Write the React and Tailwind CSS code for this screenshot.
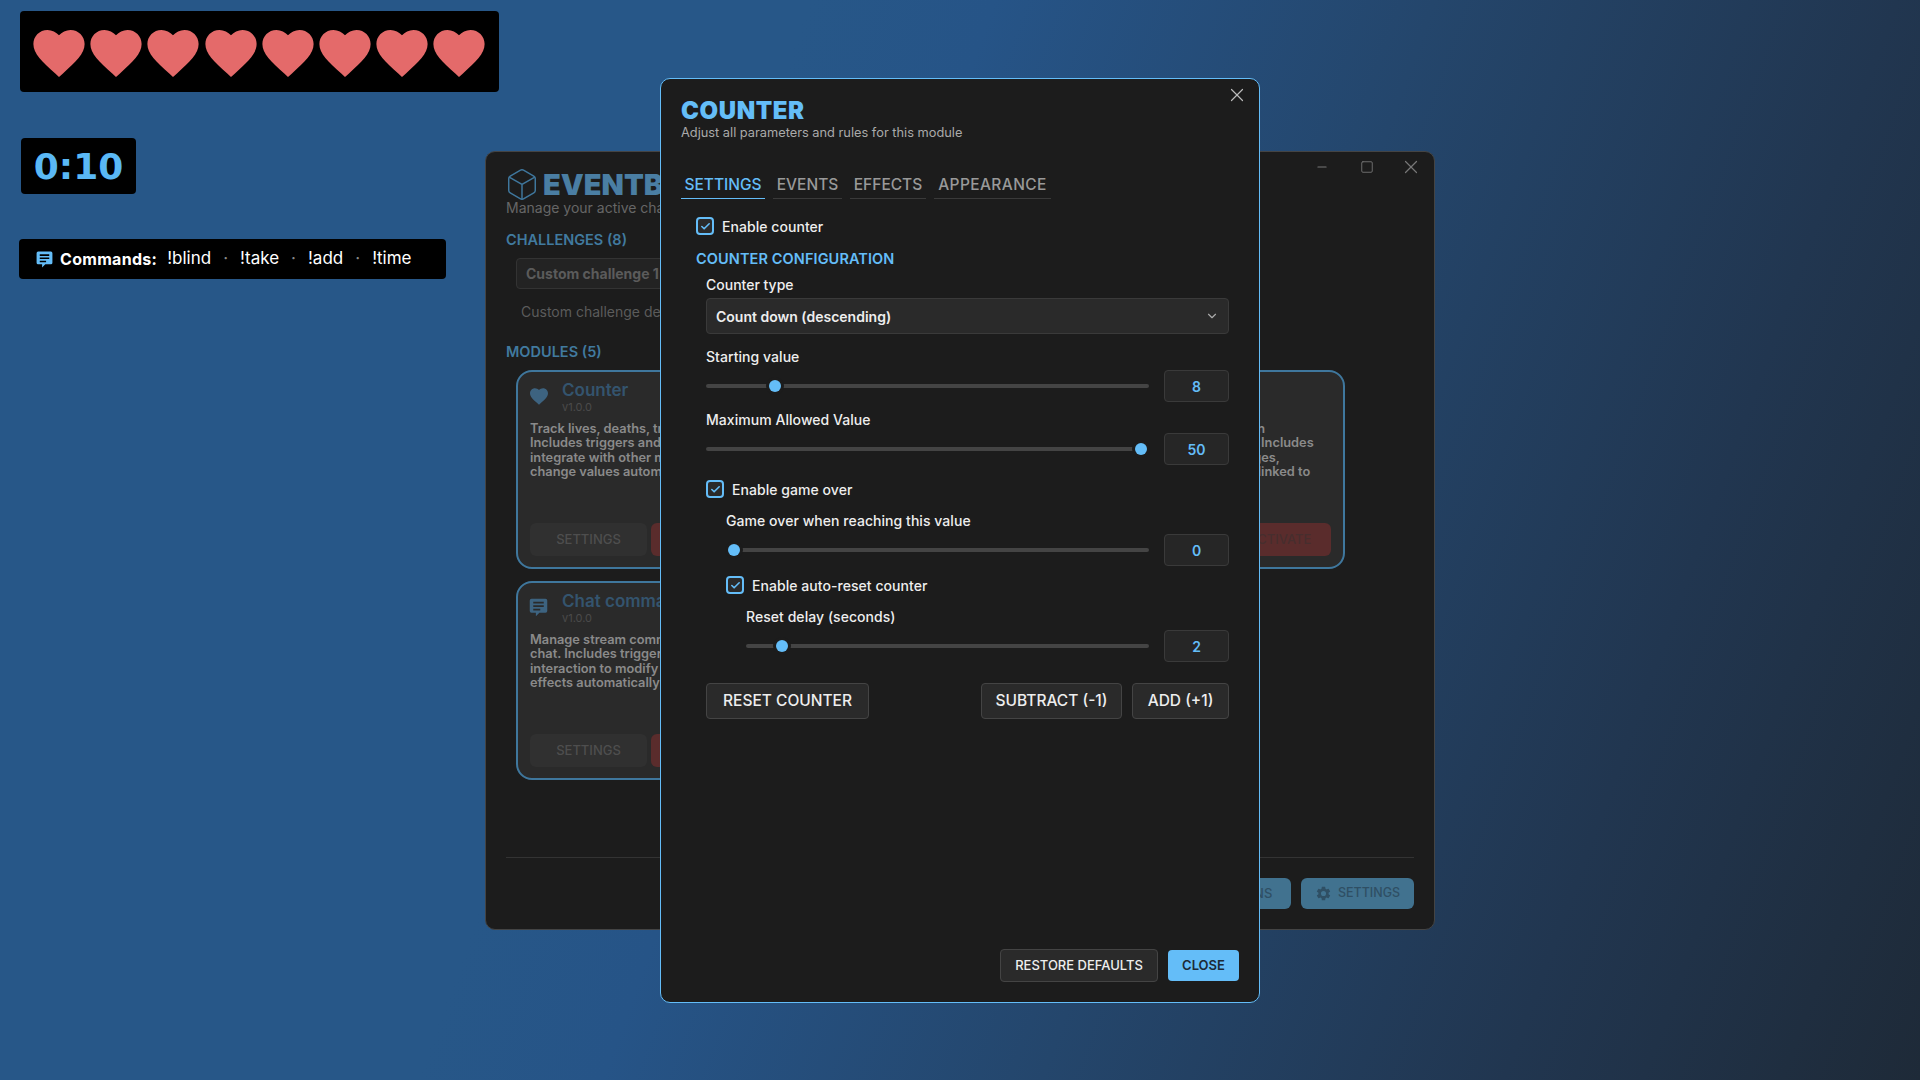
import React from 'react';
import { Check, ChevronDown, Minus, Square, X } from 'lucide-react';

const font = "font-['Inter','Liberation_Sans',sans-serif]";

const heartPath = "M12 21.35l-1.45-1.32C5.4 15.36 2 12.28 2 8.5 2 5.42 4.42 3 7.5 3c1.74 0 3.41.81 4.5 2.09C13.09 3.81 14.76 3 16.5 3 19.58 3 22 5.42 22 8.5c0 3.78-3.4 6.86-8.55 11.54L12 21.35z";
const chatPath = "M4 2h16a2 2 0 0 1 2 2v12a2 2 0 0 1-2 2h-7l-4 4v-4H4a2 2 0 0 1-2-2V4a2 2 0 0 1 2-2zM6 5.5v2h12v-2zM6 9.5v2h12v-2zM6 13.5v2h8v-2z";
const gearPath = "M19.14 12.94c.04-.3.06-.61.06-.94 0-.32-.02-.64-.07-.94l2.03-1.58a.49.49 0 0 0 .12-.61l-1.92-3.32a.49.49 0 0 0-.59-.22l-2.39.96c-.5-.38-1.03-.7-1.62-.94l-.36-2.54a.48.48 0 0 0-.48-.41h-3.84a.48.48 0 0 0-.47.41l-.36 2.54c-.59.24-1.13.57-1.62.94l-2.39-.96a.48.48 0 0 0-.59.22L2.74 8.87a.48.48 0 0 0 .12.61l2.03 1.58c-.05.3-.09.63-.09.94s.02.64.07.94l-2.03 1.58a.49.49 0 0 0-.12.61l1.92 3.32c.12.22.37.29.59.22l2.39-.96c.5.38 1.03.7 1.62.94l.36 2.54c.05.24.24.41.48.41h3.84c.24 0 .44-.17.47-.41l.36-2.54c.59-.24 1.13-.56 1.62-.94l2.39.96c.22.08.47 0 .59-.22l1.92-3.32a.48.48 0 0 0-.12-.61l-2.01-1.58zM12 15.6A3.6 3.6 0 1 1 12 8.4a3.6 3.6 0 0 1 0 7.2z";

function Heart({ className }) {
  return (
    <svg viewBox="2 3 20 18.35" className={className} fill="currentColor">
      <path d={heartPath} />
    </svg>
  );
}

function ChatIcon({ className }) {
  return (
    <svg viewBox="0 0 24 24" className={className} fill="currentColor">
      <path fillRule="evenodd" d={chatPath} />
    </svg>
  );
}

function Hearts() {
  const hearts = [0, 1, 2, 3, 4, 5, 6, 7];
  return (
    <div className="absolute left-[20px] top-[11px] flex h-[81px] w-[479px] items-center gap-[5.2px] rounded bg-black pl-[13px] pt-[4px]">
      {hearts.map(h => <Heart key={h} className="h-[47px] w-[52px] text-[#e46a6a]" />)}
    </div>
  );
}

function Timer() {
  return (
    <div className="absolute left-[21px] top-[138px] flex h-[56px] w-[115px] items-center justify-center rounded bg-black pt-[2px] font-['DejaVu_Sans',sans-serif] text-[36px] font-bold text-[#5ab8f5]">
      0:10
    </div>
  );
}

function Commands() {
  const cmds = ['!blind', '!take', '!add', '!time'];
  return (
    <div className={`absolute left-[19px] top-[239px] flex h-[40px] w-[427px] items-center rounded bg-black pl-[16px] text-[17px] text-white ${font}`}>
      <ChatIcon className="h-[19px] w-[19px] text-[#64bdf8]" />
      <span className="ml-[6px] text-[16px] font-bold tracking-[0.3px]">Commands:</span>
      {cmds.map((c, i) => (
        <React.Fragment key={c}>
          {i > 0 && <span className="mx-[12px] text-[#888]">·</span>}
          <span className={i === 0 ? 'ml-[10px]' : ''}>{c}</span>
        </React.Fragment>
      ))}
    </div>
  );
}

function ModuleCard({ icon, name, lines }) {
  return (
    <div className="h-[199px] rounded-[16px] border-2 border-[#3f779d] bg-[#2a2a2a] px-[12px] pt-[7px]">
      <div className="flex gap-[14px]">
        <div className="w-[18px] pt-[6px] text-[#3d6380]">{icon}</div>
        <div>
          <div className="text-[17px] leading-[22px] font-semibold text-[#34546e]">{name}</div>
          <div className="text-[11px] leading-[12px] text-[#4a4a4a]">v1.0.0</div>
        </div>
      </div>
      <div className="mt-[9px] h-[93px] text-[12.8px] leading-[14.3px] font-semibold text-[#8a8a8a]">
        {lines.map(l => <div key={l} className="whitespace-nowrap">{l}</div>)}
      </div>
      <div className="mt-[8px] flex gap-[4px]">
        <div className="flex h-[33px] w-[117px] items-center justify-center rounded-md bg-[#303030] text-[13px] font-medium text-[#4e4e4e]">SETTINGS</div>
        <div className="flex h-[33px] flex-1 items-center justify-center rounded-md bg-[#5a2c2c] text-[13px] font-medium text-[#472e2e]">DEACTIVATE</div>
      </div>
    </div>
  );
}

function BackWindow() {
  const chat = <ChatIcon className="-ml-[2px] mt-[1px] h-[21px] w-[21px]" />;
  return (
    <div className={`absolute left-[485px] top-[151px] flex h-[779px] w-[950px] flex-col rounded-[10px] border border-[#444] bg-[#1c1c1c] px-[20px] ${font}`}>
      <div className="absolute right-[12px] top-[4px] flex items-center text-[#777]">
        <Minus size={14} strokeWidth={2} />
        <Square size={14} strokeWidth={1.5} className="ml-[31px]" />
        <X size={22} strokeWidth={1.3} className="ml-[26px]" />
      </div>
      <div className="mt-[17px] flex items-center gap-[7px]">
        <svg viewBox="2.5 1.5 19 21" className="ml-[2px] h-[31px] w-[28px] text-[#3f779d]" fill="none" stroke="currentColor" strokeWidth="1">
          <path d="M21 16V8a2 2 0 0 0-1-1.73l-7-4a2 2 0 0 0-2 0l-7 4A2 2 0 0 0 3 8v8a2 2 0 0 0 1 1.73l7 4a2 2 0 0 0 2 0l7-4A2 2 0 0 0 21 16z" />
          <path d="M3.3 7 12 12l8.7-5M12 22V12" />
        </svg>
        <div className="text-[29px] leading-[30px] font-black text-[#4a7ea3]">EVENTBOX</div>
      </div>
      <div className="text-[14px] leading-[16px] text-[#666]">Manage your active challenges and modules</div>
      <div className="mt-[15px] text-[14.5px] leading-[18px] font-semibold text-[#417a9f]">CHALLENGES (8)</div>
      <div className="mt-[9px] ml-[10px] flex h-[31px] w-[400px] items-center rounded border border-[#333] bg-[#232323] px-[9px] text-[14px] font-bold text-[#5b5b5b]">Custom challenge 1</div>
      <div className="mt-[15px] ml-[15px] text-[14px] leading-[16px] text-[#5b5b5b]">Custom challenge description</div>
      <div className="mt-[23px] text-[14.5px] leading-[18px] font-semibold text-[#417a9f]">MODULES (5)</div>
      <div className="mt-[9px] ml-[10px] mr-[69px] grid grid-cols-3 gap-[12px]">
        <ModuleCard
          icon={<Heart className="mt-[3px] h-[17px] w-[18px]" />}
          name="Counter"
          lines={['Track lives, deaths, tries or any', 'Includes triggers and effects to', 'integrate with other modules and', 'change values automatically.']}
        />
        <ModuleCard
          icon={chat}
          name="Overlay"
          lines={['Show an overlay on screen', 'in a custom layout. Includes', 'presets and animated images,', 'and rules linked to modules']}
        />
        <ModuleCard
          icon={chat}
          name="Timer"
          lines={['Create a timer on the screen', 'Add extra time from a chat. Includes', 'and rules, presets and images,', 'with lots of custom effects linked to']}
        />
        <ModuleCard
          icon={chat}
          name="Chat commands"
          lines={['Manage stream commands from', 'chat. Includes triggers and', 'interaction to modify values and', 'effects automatically.']}
        />
      </div>
      <div className="mt-auto">
        <div className="h-px bg-[#333]" />
        <div className="flex justify-end gap-[10px] pb-[20px] pt-[20px]">
          <div className="flex h-[31px] w-[120px] items-center justify-center rounded-md bg-[#41728f] text-[13px] font-medium text-[#2f4f64]">EXTENSIONS</div>
          <div className="flex h-[31px] w-[113px] items-center justify-center gap-[6px] rounded-md bg-[#41728f] text-[12.5px] font-medium text-[#2f4f64]">
            <svg viewBox="0 0 24 24" className="h-[17px] w-[17px]" fill="currentColor"><path d={gearPath} /></svg>
            SETTINGS
          </div>
        </div>
      </div>
    </div>
  );
}

function CheckRow({ label, className = '' }) {
  return (
    <div className={`flex h-[18px] items-center gap-[8px] ${className}`}>
      <div className="flex h-[18px] w-[18px] items-center justify-center rounded-[4px] border-2 border-[#64bdf8] bg-[#2a2a2a] text-[#64bdf8]">
        <Check size={11} strokeWidth={3.5} />
      </div>
      <span className="text-[14px] font-medium tracking-[0.05px] text-[#eee]">{label}</span>
    </div>
  );
}

function SliderRow({ label, pos, className = '' }) {
  return (
    <div className={className}>
      <div className="text-[14px] leading-[16px] font-medium tracking-[0.05px] text-[#eee]">{label.text}</div>
      <div className="mt-[5px] flex h-[32px] items-center gap-[15px]">
        <div className="relative h-[4px] flex-1 rounded-full bg-[#444]">
          <div
            className="absolute top-1/2 h-[12px] w-[12px] -translate-x-1/2 -translate-y-1/2 rounded-full bg-[#64bdf8] shadow-[0_0_0_3px_#1c1c1c]"
            style={{ left: pos + 'px' }}
          />
        </div>
        <div className="flex h-[32px] w-[65px] items-center justify-center rounded border border-[#3a3a3a] bg-[#262626] text-[14px] font-semibold text-[#64bdf8]">{label.value}</div>
      </div>
    </div>
  );
}

function OutlineButton({ children, className = '' }) {
  return (
    <div className={`flex items-center justify-center rounded border border-[#444] bg-[#2a2a2a] font-medium text-[#eee] ${className}`}>{children}</div>
  );
}

function CounterModal() {
  const tabs = [
    { name: 'SETTINGS', w: 'w-[84px]', on: true },
    { name: 'EVENTS', w: 'w-[69px]' },
    { name: 'EFFECTS', w: 'w-[76px]' },
    { name: 'APPEARANCE', w: 'w-[117px] tracking-[0.4px]' },
  ];
  return (
    <div className={`absolute left-[660px] top-[78px] flex h-[925px] w-[600px] flex-col rounded-[10px] border border-[#64bdf8] bg-[#1c1c1c] px-[20px] ${font}`}>
      <X size={22} strokeWidth={1.3} className="absolute right-[11px] top-[5px] text-[#bbb]" />
      <div className="mt-[19px] text-[24px] leading-[26px] font-black tracking-[0.6px] text-[#64bdf8]">COUNTER</div>
      <div className="mt-[1px] text-[12.8px] leading-[16px] text-[#aaa]">Adjust all parameters and rules for this module</div>
      <div className="mt-[29px] flex gap-[8px]">
        {tabs.map(t => (
          <div
            key={t.name}
            className={`flex h-[29px] items-center justify-center border-b pt-[1px] text-[15.5px] font-medium ${t.w} ${t.on ? 'border-[#64bdf8] text-[#64bdf8]' : 'border-[#3a3a3a] text-[#999]'}`}
          >
            {t.name}
          </div>
        ))}
      </div>
      <div className="ml-[15px] mr-[10px]">
        <CheckRow label="Enable counter" className="mt-[18px]" />
        <div className="mt-[15px] text-[14.5px] leading-[18px] font-semibold tracking-[0.1px] text-[#64bdf8]">COUNTER CONFIGURATION</div>
        <div className="ml-[10px]">
          <div className="mt-[9px] text-[14px] leading-[16px] font-medium text-[#eee]">Counter type</div>
          <div className="mt-[5px] flex h-[36px] items-center justify-between rounded border border-[#3a3a3a] bg-[#2a2a2a] pl-[9px] pr-[9px] text-[14px] font-semibold text-[#eee]">
            Count down (descending)
            <ChevronDown size={14} strokeWidth={2} className="text-[#aaa]" />
          </div>
          <SliderRow className="mt-[15px]" label={{ text: 'Starting value', value: '8' }} pos={69} />
          <SliderRow className="mt-[10px]" label={{ text: 'Maximum Allowed Value', value: '50' }} pos={435} />
          <CheckRow label="Enable game over" className="mt-[15px]" />
          <div className="ml-[20px]">
            <SliderRow className="mt-[15px]" label={{ text: 'Game over when reaching this value', value: '0' }} pos={8} />
            <CheckRow label="Enable auto-reset counter" className="mt-[10px]" />
            <SliderRow className="ml-[20px] mt-[15px]" label={{ text: 'Reset delay (seconds)', value: '2' }} pos={36} />
          </div>
          <div className="mt-[20px] flex gap-[10px] pt-[1px] text-[15.5px]">
            <OutlineButton className="mr-auto h-[36px] w-[163px]">RESET COUNTER</OutlineButton>
            <OutlineButton className="h-[36px] w-[141px]">SUBTRACT (-1)</OutlineButton>
            <OutlineButton className="h-[36px] w-[97px]">ADD (+1)</OutlineButton>
          </div>
        </div>
      </div>
      <div className="mt-auto flex items-center justify-end gap-[10px] pb-[20px] text-[13px] font-semibold">
        <OutlineButton className="h-[33px] w-[158px]">RESTORE DEFAULTS</OutlineButton>
        <div className="flex h-[31px] w-[71px] items-center justify-center rounded bg-[#64bdf8] text-[#1c2a36]">CLOSE</div>
      </div>
    </div>
  );
}

export default function App() {
  return (
    <div className="relative h-[1080px] w-[1920px] overflow-hidden bg-[linear-gradient(110deg,#275788_0%,#275788_35%,#265487_43%,#24466c_62%,#213650_82%,#1e2a38_100%)]">
      <Hearts />
      <Timer />
      <Commands />
      <BackWindow />
      <CounterModal />
    </div>
  );
}
